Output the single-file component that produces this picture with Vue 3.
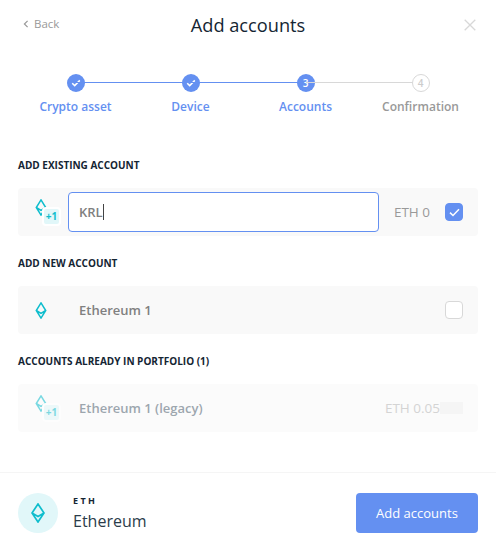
<template>
  <div class="modal">
    <header class="head">
      <a class="back">
        <svg width="6" height="8" viewBox="0 0 6 8"><path d="M4.6 .8 1.4 4l3.2 3.2" fill="none" stroke="#999" stroke-width="1.2" /></svg>
        Back
      </a>
      <h1 class="title">Add accounts</h1>
      <svg class="close" width="12" height="12" viewBox="0 0 12 12"><path d="M.7.7l10.6 10.6M11.3.7.7 11.3" fill="none" stroke="#d8d8d8" stroke-width="1.3" /></svg>
    </header>

    <ol class="steps">
      <li v-for="(s, i) in steps" :key="s.label" class="step" :class="s.state">
        <span v-if="i > 0" class="line"></span>
        <span class="dot">
          <svg v-if="s.state === 'done'" width="10" height="8" viewBox="0 0 10 8"><path d="M1.2 4.2 3.7 6.6 8.8 1.4" fill="none" stroke="#fff" stroke-width="1.5" /></svg>
          <template v-else>{{ i + 1 }}</template>
        </span>
        <span class="step-label">{{ s.label }}</span>
      </li>
    </ol>

    <main class="sections">
      <section>
        <h2 class="section-title">Add existing account</h2>
        <div class="row">
          <div class="icon double">
            <svg class="eth" width="12" height="17" viewBox="0 0 12 18"><path d="M6 1 11 9 6 17 1 9ZM1 9l5 3 5-3" fill="none" stroke="#0ebdcd" stroke-width="1.6" /></svg>
            <span class="plus">+1</span>
          </div>
          <div class="input">KRL<span class="caret"></span></div>
          <span class="balance">ETH 0</span>
          <span class="check on">
            <svg width="11" height="9" viewBox="0 0 11 9"><path d="M1 4.6 4 7.5 10 1.3" fill="none" stroke="#fff" stroke-width="1.5" /></svg>
          </span>
        </div>
      </section>

      <section>
        <h2 class="section-title">Add new account</h2>
        <div class="row">
          <div class="icon">
            <svg class="eth" width="12" height="17" viewBox="0 0 12 18"><path d="M6 1 11 9 6 17 1 9ZM1 9l5 3 5-3" fill="none" stroke="#0ebdcd" stroke-width="1.6" /></svg>
          </div>
          <span class="name">Ethereum 1</span>
          <span class="check"></span>
        </div>
      </section>

      <section>
        <h2 class="section-title">Accounts already in portfolio (1)</h2>
        <div class="row faded">
          <div class="icon double">
            <svg class="eth" width="12" height="17" viewBox="0 0 12 18"><path d="M6 1 11 9 6 17 1 9ZM1 9l5 3 5-3" fill="none" stroke="#0ebdcd" stroke-width="1.6" /></svg>
            <span class="plus">+1</span>
          </div>
          <span class="name">Ethereum 1 (legacy)</span>
          <span class="balance">ETH 0.05</span>
          <span class="blur"></span>
        </div>
      </section>
    </main>

    <footer class="foot">
      <div class="coin">
        <svg width="14" height="20" viewBox="0 0 14 20"><path d="M7 1 13 10 7 19 1 10ZM1 10l6 3.4 6-3.4" fill="none" stroke="#0ebdcd" stroke-width="1.7" /></svg>
      </div>
      <div class="coin-text">
        <div class="ticker">ETH</div>
        <div class="coin-name">Ethereum</div>
      </div>
      <button class="submit">Add accounts</button>
    </footer>
  </div>
</template>

<script setup>
const steps = [
  { label: 'Crypto asset', state: 'done' },
  { label: 'Device', state: 'done' },
  { label: 'Accounts', state: 'current' },
  { label: 'Confirmation', state: 'todo' },
];
</script>

<style>
html, body { margin: 0; background: #fff; }
</style>

<style scoped>
.modal {
  width: 496px;
  height: 553px;
  display: flex;
  flex-direction: column;
  font-family: "Open Sans", sans-serif;
  color: #142533;
  background: #fff;
}

.head {
  position: relative;
  height: 52px;
  display: flex;
  align-items: center;
  justify-content: center;
}

.back {
  position: absolute;
  left: 23px;
  top: 16px;
  display: flex;
  align-items: center;
  gap: 5px;
  font-size: 11.5px;
  line-height: 16px;
  color: #999;
}

.title {
  margin: 0 0 2px;
  font-size: 18.2px;
  font-weight: 400;
}

.close {
  position: absolute;
  right: 20px;
  top: 19px;
}

.steps {
  list-style: none;
  margin: 22px 18px 0;
  padding: 0;
  display: grid;
  grid-template-columns: repeat(4, 115px);
}

.step {
  position: relative;
  display: flex;
  flex-direction: column;
  align-items: center;
  gap: 7px;
  font-size: 12px;
  font-weight: 600;
  color: #6490f1;
}

.line {
  position: absolute;
  top: 8px;
  left: -57.5px;
  width: 115px;
  height: 1px;
  background: #6490f1;
}

.todo .line {
  background: #d8d8d8;
}

.dot {
  position: relative;
  width: 18px;
  height: 18px;
  border-radius: 50%;
  background: #6490f1;
  color: #fff;
  font-size: 10px;
  display: flex;
  align-items: center;
  justify-content: center;
}

.todo .dot {
  box-sizing: border-box;
  background: #fff;
  border: 1px solid #d8d8d8;
  color: #ccc;
}

.step-label {
  line-height: 16px;
}

.todo .step-label {
  color: #999;
}

.sections {
  margin: 44px 18px 0;
  display: flex;
  flex-direction: column;
  gap: 21px;
}

.section-title {
  margin: 0 0 17px;
  font-size: 10px;
  line-height: 12px;
  font-weight: 700;
  text-transform: uppercase;
}

.row {
  height: 48px;
  padding: 0 15px 0 17px;
  background: #f9f9f9;
  border-radius: 4px;
  display: flex;
  align-items: center;
  font-size: 13px;
  font-weight: 600;
  color: #808080;
}

.icon {
  position: relative;
  width: 33px;
  height: 18px;
  flex: none;
  display: flex;
  align-items: center;
}

.double .eth {
  position: relative;
  top: -5px;
}

.plus {
  position: absolute;
  left: 7px;
  top: 4px;
  width: 15px;
  height: 15px;
  border-radius: 4px;
  background: #e1f7f9;
  border: 2px solid #fff;
  color: #0ebdcd;
  font-size: 10px;
  font-weight: 700;
  line-height: 15px;
  text-align: center;
}

.name {
  flex: 1;
  margin-left: 11px;
}

.input {
  flex: 1;
  height: 40px;
  margin-right: 15px;
  box-sizing: border-box;
  border: 1px solid #6490f1;
  border-radius: 4px;
  background: #fff;
  padding-left: 10px;
  display: flex;
  align-items: center;
}

.caret {
  width: 1px;
  height: 16px;
  background: #444;
}

.balance {
  font-size: 13.5px;
  font-weight: 400;
  color: #999;
  margin-right: 15px;
}

.check {
  width: 16px;
  height: 16px;
  flex: none;
  border: 1px solid #d8d8d8;
  border-radius: 4px;
  background: #fff;
  display: flex;
  align-items: center;
  justify-content: center;
}

.check.on {
  background: #6490f1;
  border-color: #6490f1;
}

.faded {
  background: #fbfbfb;
}

.faded .icon,
.faded .name {
  opacity: 0.55;
}

.faded .name {
  color: #4f6170;
}

.faded .balance {
  color: #d4d4d4;
  margin-right: 0;
}

.blur {
  width: 23px;
  height: 12px;
  background: #f5f5f5;
}

.foot {
  margin-top: auto;
  height: 80px;
  border-top: 1px solid #f5f5f5;
  padding: 0 18px;
  display: flex;
  align-items: center;
}

.coin {
  width: 40px;
  height: 40px;
  border-radius: 50%;
  background: #e1f7f9;
  display: flex;
  align-items: center;
  justify-content: center;
}

.coin-text {
  flex: 1;
  margin-left: 15px;
}

.ticker {
  font-size: 9px;
  line-height: 11px;
  font-weight: 700;
  letter-spacing: 2.4px;
  margin-top: 1px;
}

.coin-name {
  margin-top: 4px;
  font-size: 16px;
  line-height: 22px;
  color: #2b3c4a;
}

.submit {
  width: 122px;
  height: 40px;
  border: 0;
  border-radius: 4px;
  background: #6490f1;
  color: #fff;
  font-family: inherit;
  font-size: 13px;
  font-weight: 500;
}
</style>
